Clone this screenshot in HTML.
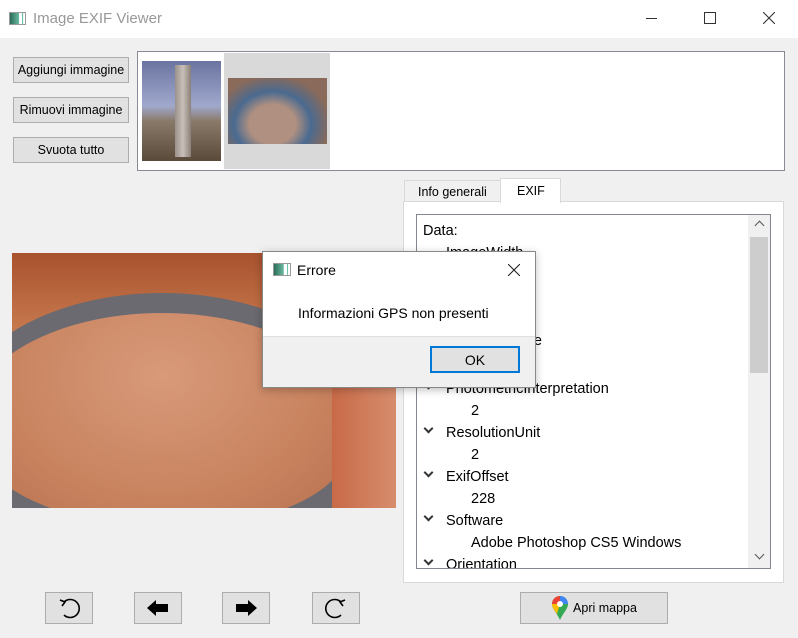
<!DOCTYPE html>
<html><head><meta charset="utf-8"><style>
*{box-sizing:border-box;margin:0;padding:0}
body{width:798px;height:638px;background:#f0f0f0;font-family:"Liberation Sans",sans-serif;font-size:13px;color:#000;position:relative;overflow:hidden}
.abs{position:absolute}
.btn{position:absolute;background:#e1e1e1;border:1px solid #adadad;display:flex;align-items:center;justify-content:center;font-size:12.5px}
.row{position:absolute;font-size:14.5px;white-space:nowrap}
.chev{position:absolute;width:7px;height:7px;border-right:2px solid #333;border-bottom:2px solid #333;transform:rotate(45deg)}
</style></head><body>
<div class="abs" style="left:0;top:0;width:798px;height:38px;background:#fff"></div>
<div class="abs" style="left:9px;top:12px;width:17px;height:13px;border:1px solid #999;background:linear-gradient(90deg,#2a6e5a,#6cb8a0 60%,#fff 62%,#fff 80%,#3a8 82%,#fff 90%)"></div>
<div class="abs" style="left:33px;top:10px;font-size:15px;color:#999">Image EXIF Viewer</div>
<div class="abs" style="left:646px;top:18px;width:11px;height:1px;background:#333"></div>
<div class="abs" style="left:704px;top:12px;width:12px;height:12px;border:1px solid #333"></div>
<svg class="abs" style="left:763px;top:12px" width="12" height="12"><path d="M0 0L12 12M12 0L0 12" stroke="#333" stroke-width="1.1"/></svg>

<div class="btn" style="left:13px;top:57px;width:116px;height:26px">Aggiungi immagine</div>
<div class="btn" style="left:13px;top:97px;width:116px;height:26px">Rimuovi immagine</div>
<div class="btn" style="left:13px;top:137px;width:116px;height:26px">Svuota tutto</div>

<div class="abs" style="left:137px;top:51px;width:648px;height:120px;background:#fff;border:1px solid #8a8a96"></div>
<div class="abs" style="left:142px;top:61px;width:79px;height:100px;background:linear-gradient(180deg,#6a74a0,#a0a8cc 45%,#8a7a6a 60%,#5a4a3a)"></div>
<div class="abs" style="left:175px;top:65px;width:16px;height:92px;background:linear-gradient(90deg,#9a928a,#c8c0b8,#8a8078)"></div>
<div class="abs" style="left:224px;top:53px;width:106px;height:116px;background:#d9d9d9"></div>
<div class="abs" style="left:228px;top:78px;width:99px;height:66px;background:radial-gradient(ellipse at 45% 70%,#b09080 30%,#4a6a90 50%,#8a6a5a 75%)"></div>

<div class="abs" style="left:12px;top:253px;width:384px;height:255px;overflow:hidden;background:#b86a44">
  <div class="abs" style="left:0;top:0;width:384px;height:80px;background:linear-gradient(180deg,#a8522e,#c87a4e)"></div>
  <div class="abs" style="left:-60px;top:40px;width:420px;height:260px;border-radius:50% 50% 45% 45%;background:#6a6a70"></div>
  <div class="abs" style="left:-40px;top:60px;width:380px;height:210px;border-radius:50% 50% 40% 45%;background:radial-gradient(ellipse at 50% 30%,#d89a7a,#c8825e 60%,#b87050)"></div>
  <div class="abs" style="left:320px;top:60px;width:70px;height:200px;background:linear-gradient(90deg,#c86a48,#d89070)"></div>
</div>

<div class="abs" style="left:404px;top:180px;width:97px;height:22px;background:#f0f0f0;border:1px solid #d9d9d9;font-size:12.5px;padding:4px 0 0 13px">Info generali</div>
<div class="abs" style="left:403px;top:201px;width:381px;height:382px;background:#fff;border:1px solid #d9d9d9"></div>
<div class="abs" style="left:500px;top:178px;width:61px;height:25px;background:#fff;border:1px solid #d9d9d9;border-bottom:none;font-size:12.5px;padding:5px 0 0 16px">EXIF</div>

<div class="abs" style="left:416px;top:214px;width:355px;height:355px;background:#fff;border:1px solid #828790;overflow:hidden">
  <div class="abs" style="left:331px;top:0;width:22px;height:353px;background:#f0f0f0"></div>
  <div class="abs" style="left:333px;top:22px;width:18px;height:136px;background:#cdcdcd"></div>
  <div class="abs" style="left:339px;top:7px;width:7px;height:7px;border-left:1.5px solid #555;border-top:1.5px solid #555;transform:rotate(45deg)"></div>
  <div class="abs" style="left:339px;top:336px;width:7px;height:7px;border-right:1.5px solid #555;border-bottom:1.5px solid #555;transform:rotate(45deg)"></div>
  <div class="row" style="left:6px;top:8px">Data:</div>
  <div class="row" style="left:29px;top:30px">ImageWidth</div>
  <div class="row" style="left:29px;top:118px">BitsPerSample</div>
  <div class="chev" style="left:8px;top:166px"></div><div class="row" style="left:29px;top:166px">PhotometricInterpretation</div>
  <div class="row" style="left:54px;top:188px">2</div>
  <div class="chev" style="left:8px;top:210px"></div><div class="row" style="left:29px;top:210px">ResolutionUnit</div>
  <div class="row" style="left:54px;top:232px">2</div>
  <div class="chev" style="left:8px;top:254px"></div><div class="row" style="left:29px;top:254px">ExifOffset</div>
  <div class="row" style="left:54px;top:276px">228</div>
  <div class="chev" style="left:8px;top:298px"></div><div class="row" style="left:29px;top:298px">Software</div>
  <div class="row" style="left:54px;top:320px">Adobe Photoshop CS5 Windows</div>
  <div class="chev" style="left:8px;top:342px"></div><div class="row" style="left:29px;top:342px">Orientation</div>
</div>

<div class="abs" style="left:262px;top:251px;width:274px;height:137px;background:#f0f0f0;border:1px solid #888;box-shadow:0 2px 8px rgba(0,0,0,.25)">
  <div class="abs" style="left:0;top:0;width:272px;height:85px;background:#fff;border-bottom:1px solid #dfdfdf"></div>
  <div class="abs" style="left:10px;top:11px;width:18px;height:13px;border:1px solid #999;background:linear-gradient(90deg,#2a6e5a,#6cb8a0 60%,#fff 62%,#fff 80%,#3a8 82%,#fff 90%)"></div>
  <div class="abs" style="left:34px;top:10px;font-size:14px">Errore</div>
  <svg class="abs" style="left:245px;top:12px" width="12" height="12"><path d="M0 0L12 12M12 0L0 12" stroke="#222" stroke-width="1.1"/></svg>
  <div class="abs" style="left:35px;top:53px;font-size:14px">Informazioni GPS non presenti</div>
  <div class="btn" style="left:167px;top:94px;width:90px;height:27px;border:2px solid #0078d7;font-size:14px">OK</div>
</div>

<div class="btn" style="left:45px;top:592px;width:48px;height:32px"><svg width="26" height="26" viewBox="0 0 26 26"><path d="M8 7 A9 9 0 1 1 8 20" fill="none" stroke="#000" stroke-width="1.6"/><path d="M4 5 L9 7 L6 11" fill="none" stroke="#000" stroke-width="1.6"/></svg></div>
<div class="btn" style="left:134px;top:592px;width:48px;height:32px"><svg width="26" height="20" viewBox="0 0 26 20"><path d="M2 10 L11 2 V6 H23 V14 H11 V18 Z"/></svg></div>
<div class="btn" style="left:222px;top:592px;width:48px;height:32px"><svg width="26" height="20" viewBox="0 0 26 20"><path d="M24 10 L15 2 V6 H3 V14 H15 V18 Z"/></svg></div>
<div class="btn" style="left:312px;top:592px;width:48px;height:32px"><svg width="26" height="26" viewBox="0 0 26 26"><path d="M18 7 A9 9 0 1 0 18 20" fill="none" stroke="#000" stroke-width="1.6"/><path d="M22 5 L17 7 L20 11" fill="none" stroke="#000" stroke-width="1.6"/></svg></div>
<div class="btn" style="left:520px;top:592px;width:148px;height:32px;font-size:12.5px"><svg width="18" height="26" viewBox="0 0 18 26" style="margin-right:4px"><path d="M9 1 C4 1 1 5 1 9 C1 14 6 18 9 25 C12 18 17 14 17 9 C17 5 14 1 9 1Z" fill="#34a853"/><path d="M9 1 C4 1 1 5 1 9 L9 9Z" fill="#ea4335"/><path d="M9 1 C14 1 17 5 17 9 L9 9Z" fill="#4285f4"/><path d="M1 9 C1 13 4 16 6 19 L9 9Z" fill="#fbbc04"/><circle cx="9" cy="9" r="3" fill="#fff"/></svg>Apri mappa</div>
</body></html>
